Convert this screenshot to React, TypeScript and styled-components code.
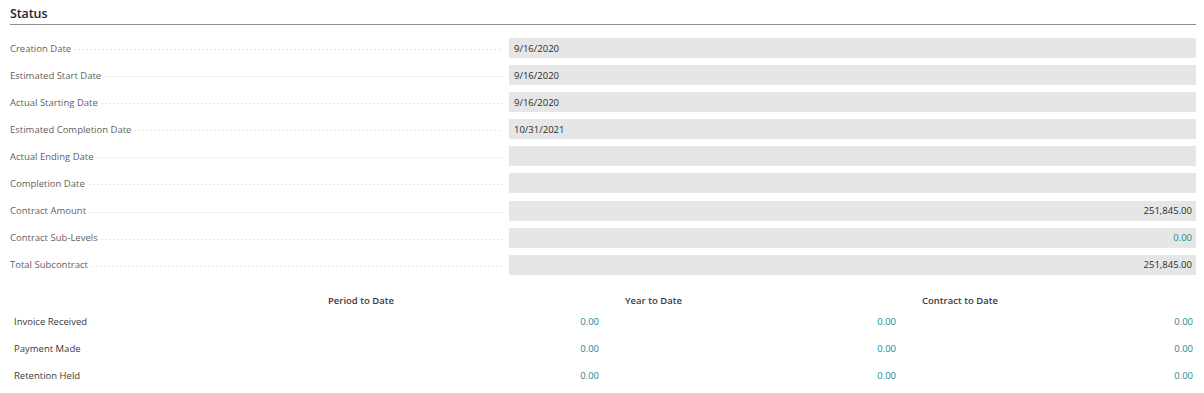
import React from "react";
import styled, { createGlobalStyle } from "styled-components";

const Global = createGlobalStyle`
  html, body { margin: 0; padding: 0; background: #ffffff; }
  body { font-family: "Segoe UI", "Open Sans", "Noto Sans", sans-serif; color: #212121; }
`;

const Page = styled.div`
  padding: 0 8px 0 10px;
`;

const Header = styled.div`
  height: 25px;
  border-bottom: 1px solid #8c8c8c;
  display: flex;
  align-items: center;
  font-size: 12.5px;
  font-weight: 600;
  color: #262626;
  letter-spacing: -0.1px;
  box-sizing: border-box;
  padding-top: 3px;
`;

const Fields = styled.div`
  margin-top: 13px;
  display: flex;
  flex-direction: column;
  gap: 7.1px;
`;

const FieldRow = styled.div`
  display: grid;
  grid-template-columns: 499px 1fr;
  height: 20px;
  align-items: center;
`;

const LabelCell = styled.div`
  display: flex;
  align-items: center;
  padding-right: 6px;
  min-width: 0;
`;

const Label = styled.span`
  font-size: 9.5px;
  color: #5f5f5f;
  white-space: nowrap;
  padding-right: 4px;
`;

const Leader = styled.span`
  flex: 1;
  height: 1px;
  margin-top: 3px;
  background-image: linear-gradient(to right, #cfcfcf 1px, transparent 1px);
  background-size: 4px 1px;
  background-repeat: repeat-x;
`;

const ValueBox = styled.div<{ $right?: boolean; $link?: boolean }>`
  height: 20px;
  background: #e6e6e7;
  display: flex;
  align-items: center;
  justify-content: ${(p) => (p.$right ? "flex-end" : "flex-start")};
  padding: 0 4px 0 5px;
  font-size: 9.5px;
  color: ${(p) => (p.$link ? "#1b8a90" : "#2b2b2b")};
`;

const Table = styled.div`
  margin-top: 19px;
  display: grid;
  grid-template-columns: 292px 297px 297px 297px;
  grid-template-rows: 14px;
  grid-auto-rows: 27px;
  align-items: center;
`;

const TableHeadRow = styled.div`
  display: contents;
`;

const ColHead = styled.div`
  font-size: 9.5px;
  font-weight: 600;
  color: #3a3a3a;
  padding-left: 26px;
`;

const RowLabel = styled.div`
  font-size: 9.5px;
  color: #3a3a3a;
  padding-left: 4px;
`;

const Amount = styled.div`
  font-size: 9.5px;
  color: #1b8a90;
  text-align: right;
`;

const fields: { label: string; value: string; right?: boolean; link?: boolean }[] = [
  { label: "Creation Date", value: "9/16/2020" },
  { label: "Estimated Start Date", value: "9/16/2020" },
  { label: "Actual Starting Date", value: "9/16/2020" },
  { label: "Estimated Completion Date", value: "10/31/2021" },
  { label: "Actual Ending Date", value: "" },
  { label: "Completion Date", value: "" },
  { label: "Contract Amount", value: "251,845.00", right: true },
  { label: "Contract Sub-Levels", value: "0.00", right: true, link: true },
  { label: "Total Subcontract", value: "251,845.00", right: true },
];

const tableRows = ["Invoice Received", "Payment Made", "Retention Held"];

export default function App() {
  return (
    <>
      <Global />
      <Page>
        <Header>Status</Header>
        <Fields>
          {fields.map((f) => (
            <FieldRow key={f.label}>
              <LabelCell>
                <Label>{f.label}</Label>
                <Leader />
              </LabelCell>
              <ValueBox $right={f.right} $link={f.link}>
                {f.value}
              </ValueBox>
            </FieldRow>
          ))}
        </Fields>
        <Table>
          <TableHeadRow>
            <div />
            <ColHead>Period to Date</ColHead>
            <ColHead>Year to Date</ColHead>
            <ColHead>Contract to Date</ColHead>
          </TableHeadRow>
          {tableRows.map((r) => (
            <React.Fragment key={r}>
              <RowLabel>{r}</RowLabel>
              <Amount>0.00</Amount>
              <Amount>0.00</Amount>
              <Amount>0.00</Amount>
            </React.Fragment>
          ))}
        </Table>
      </Page>
    </>
  );
}
